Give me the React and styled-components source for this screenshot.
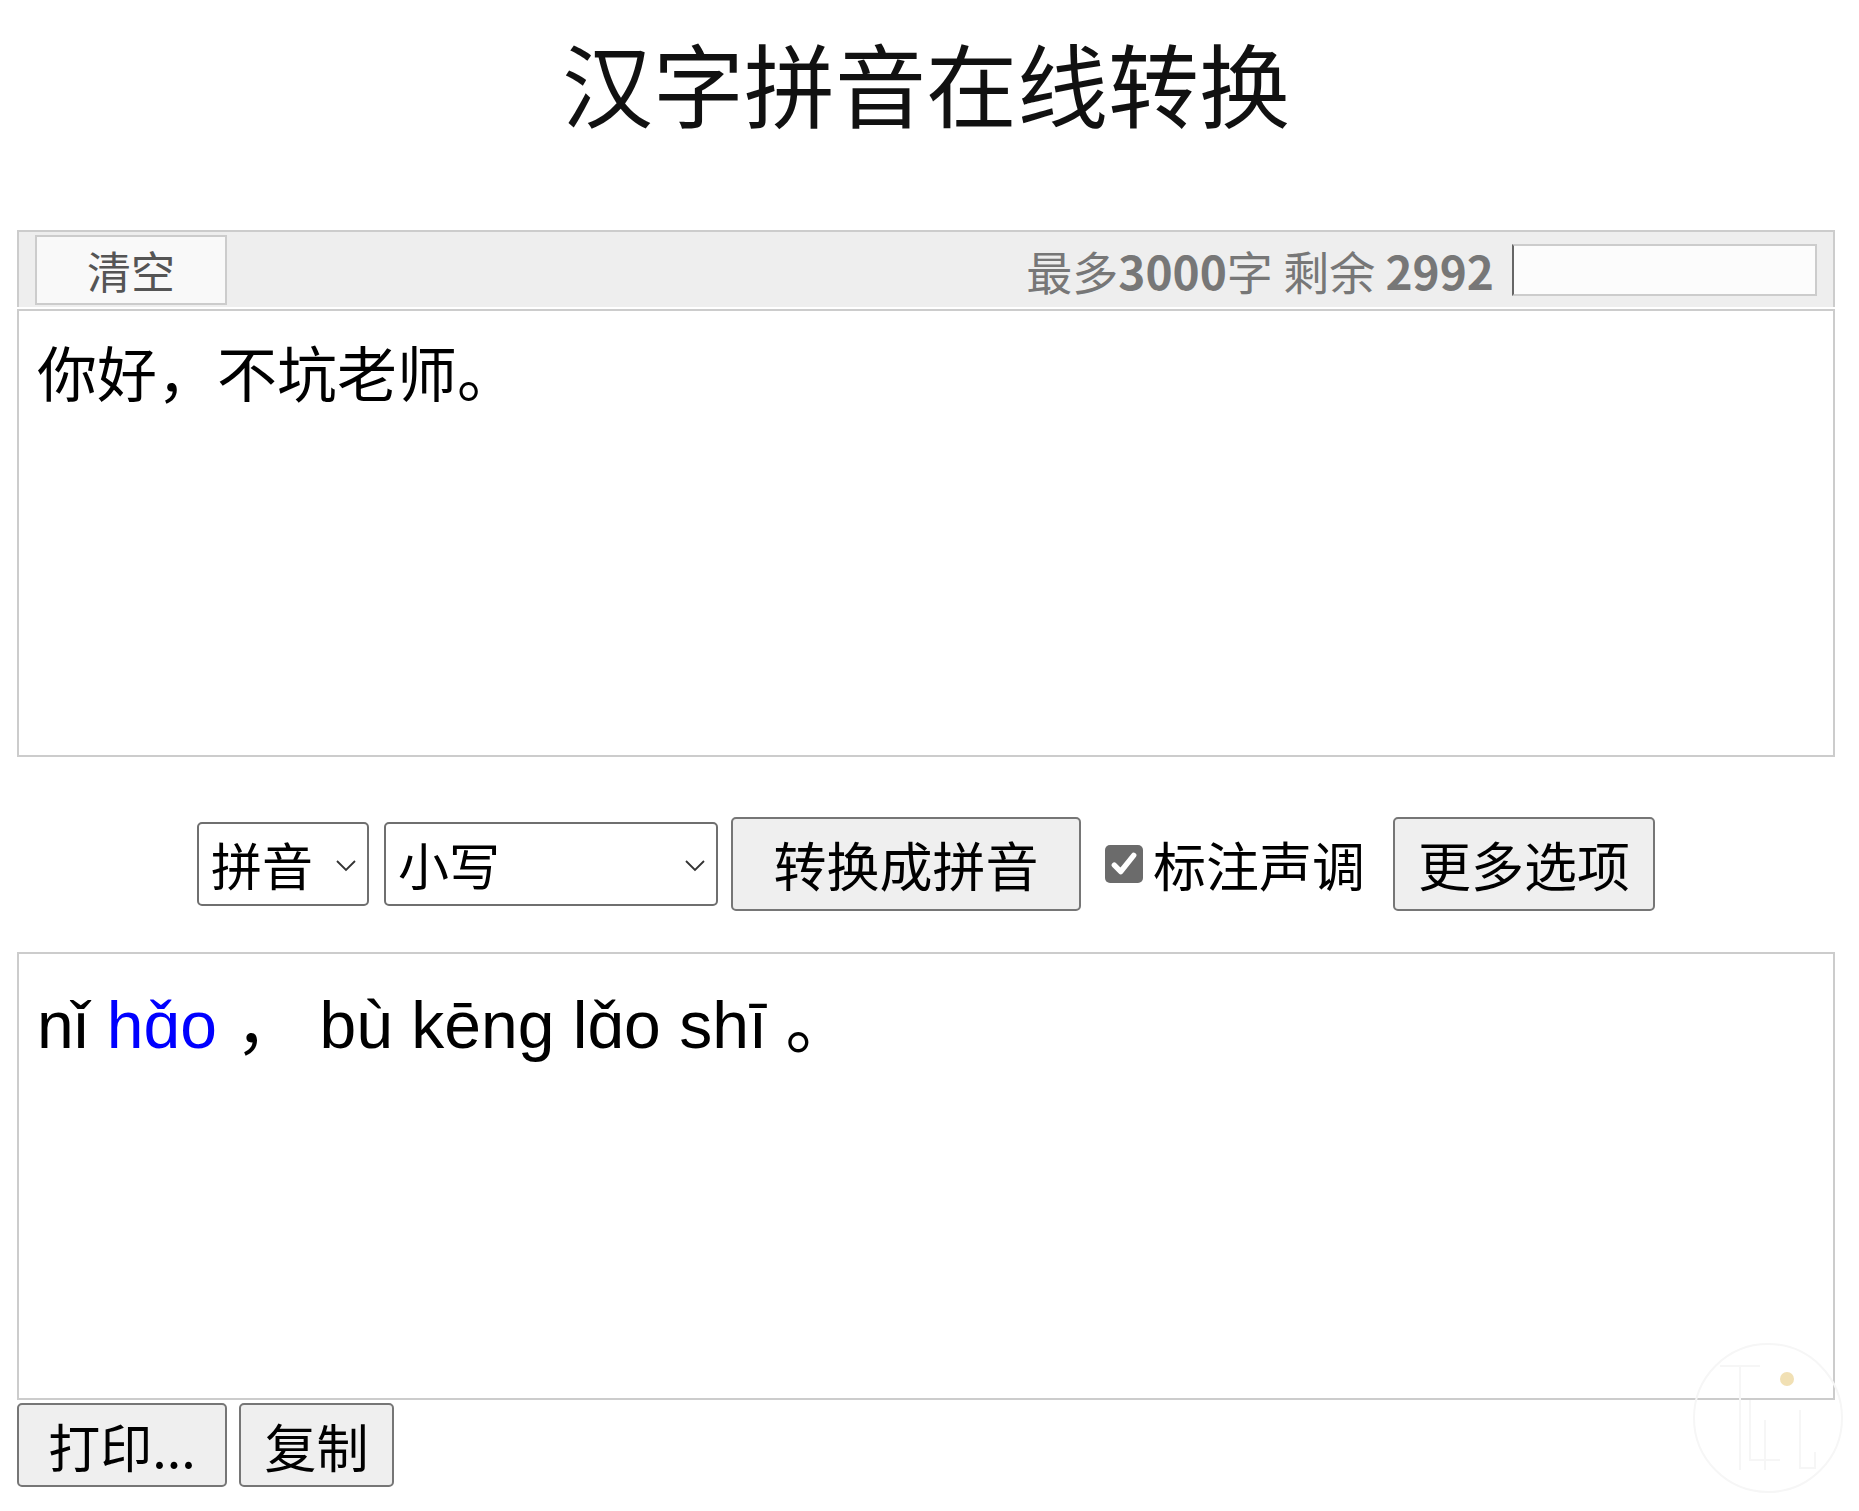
import React from "react";
import styled, { createGlobalStyle } from "styled-components";

const GlobalStyle = createGlobalStyle`
  html, body {
    margin: 0;
    padding: 0;
    background: #fff;
  }
  body {
    font-family: "Noto Sans CJK SC", "Noto Sans", sans-serif;
    color: #000;
  }
`;

const Page = styled.div`
  position: relative;
  min-height: 1511px;
  padding: 16px 24px 0 17px;
  box-sizing: border-box;
`;

const Title = styled.h1`
  margin: 0 0 84px;
  text-align: center;
  font-size: 91px;
  line-height: 130px;
  font-weight: 400;
  color: #111;
`;

const Toolbar = styled.div`
  display: flex;
  align-items: center;
  height: 77px;
  box-sizing: border-box;
  padding: 0 16px;
  background: #eee;
  border: 2px solid #ccc;
  border-bottom: none;
`;

const ClearButton = styled.button`
  width: 192px;
  height: 70px;
  box-sizing: border-box;
  border: 2px solid #ccc;
  background: #f9f9f9;
  color: #555;
  font-family: inherit;
  font-size: 44px;
  line-height: 1;
  padding: 0;
  cursor: pointer;
`;

const Counter = styled.span`
  margin-left: auto;
  font-size: 46px;
  color: #777;
  white-space: pre;

  b {
    font-weight: 700;
  }
`;

const MiniInput = styled.input`
  width: 305px;
  height: 52px;
  box-sizing: border-box;
  margin-left: 18px;
  border: 2px solid #ccc;
  border-left: 2px solid #666;
  background: #fcfcfc;
  outline: none;
`;

const InputArea = styled.textarea`
  display: block;
  width: 100%;
  height: 448px;
  box-sizing: border-box;
  margin: 2px 0 0;
  padding: 16px 18px;
  border: 2px solid #ccc;
  font-family: "Noto Sans CJK SC", sans-serif;
  font-size: 60px;
  line-height: 1.45;
  color: #000;
  resize: none;
  outline: none;
`;

const Controls = styled.div`
  display: flex;
  justify-content: center;
  align-items: center;
  margin: 60px 0 41px;
`;

const SelectWrap = styled.span`
  position: relative;
  display: inline-block;
  width: ${(p) => p.$w}px;
  height: 84px;
  margin-right: ${(p) => p.$gap}px;
`;

const Select = styled.select`
  width: 100%;
  height: 100%;
  box-sizing: border-box;
  appearance: none;
  border: 2px solid #6f6f6f;
  border-radius: 5px;
  background: #fff;
  padding: 0 0 0 12px;
  font-family: "Noto Sans CJK SC", sans-serif;
  font-size: 51px;
  color: #000;
  outline: none;
`;

const Chevron = styled.svg`
  position: absolute;
  right: 13px;
  top: 50%;
  width: 20px;
  height: 12px;
  margin-top: -4px;
  pointer-events: none;
`;

const Button = styled.button`
  width: ${(p) => p.$w}px;
  height: ${(p) => p.$h || 94}px;
  box-sizing: border-box;
  padding: 0;
  border: 2px solid #767676;
  border-radius: 5px;
  background: #efefef;
  font-family: "Noto Sans CJK SC", sans-serif;
  font-size: ${(p) => p.$fs || 53}px;
  color: #000;
  cursor: pointer;
`;

const CheckLabel = styled.label`
  display: flex;
  align-items: center;
  margin: 0 28px 0 24px;
  font-size: 53px;
`;

const CheckBox = styled.span`
  display: inline-flex;
  align-items: center;
  justify-content: center;
  width: 38px;
  height: 38px;
  margin-right: 10px;
  border-radius: 5px;
  background: #6b6b6b;
`;

const Output = styled.div`
  height: 448px;
  box-sizing: border-box;
  padding: 26px 18px 0;
  border: 2px solid #ccc;
  font-family: "Liberation Sans", "Noto Sans CJK SC", sans-serif;
  font-size: 66px;
  line-height: 90px;
  color: #000;
  white-space: pre-wrap;
`;

const Heteronym = styled.span`
  color: #00f;
`;

const Actions = styled.div`
  display: flex;
  gap: 12px;
  margin-top: 3px;
`;

const Watermark = styled.svg`
  position: absolute;
  left: 1690px;
  top: 1340px;
  width: 156px;
  height: 156px;
  pointer-events: none;
`;

export default function App() {
  return (
    <>
      <GlobalStyle />
      <Page>
        <Title>汉字拼音在线转换</Title>
        <Toolbar>
          <ClearButton>清空</ClearButton>
          <Counter>
            最多<b>3000</b>字 剩余 <b>2992</b>
          </Counter>
          <MiniInput type="text" />
        </Toolbar>
        <InputArea defaultValue="你好，不坑老师。" />
        <Controls>
          <SelectWrap $w={172} $gap={15}>
            <Select defaultValue="pinyin">
              <option value="pinyin">拼音</option>
            </Select>
            <Chevron viewBox="0 0 20 12">
              <path d="M1 1 L10 10 L19 1" fill="none" stroke="#333" strokeWidth="1.8" />
            </Chevron>
          </SelectWrap>
          <SelectWrap $w={334} $gap={13}>
            <Select defaultValue="lower">
              <option value="lower">小写</option>
            </Select>
            <Chevron viewBox="0 0 20 12">
              <path d="M1 1 L10 10 L19 1" fill="none" stroke="#333" strokeWidth="1.8" />
            </Chevron>
          </SelectWrap>
          <Button $w={350}>转换成拼音</Button>
          <CheckLabel>
            <CheckBox>
              <svg width="28" height="28" viewBox="0 0 26 26">
                <path d="M4 14 L10 20 L22 5" fill="none" stroke="#fff" strokeWidth="5" strokeLinecap="round" strokeLinejoin="round" />
              </svg>
            </CheckBox>
            标注声调
          </CheckLabel>
          <Button $w={262}>更多选项</Button>
        </Controls>
        <Output>
          nǐ <Heteronym>hɑ̌o</Heteronym> ， bù kēng lɑ̌o shī 。
        </Output>
        <Actions>
          <Button $w={210} $h={84} $fs={52}>打印...</Button>
          <Button $w={155} $h={84} $fs={52}>复制</Button>
        </Actions>
        <Watermark viewBox="0 0 156 156">
          <circle cx="78" cy="78" r="74" fill="none" stroke="#f6f6f6" strokeWidth="2" />
          <path d="M30 26 L70 26 M50 26 L50 130 M60 60 L60 120 L90 120 M75 80 L75 130 M110 70 L110 128 L125 128 L125 112" fill="none" stroke="#f6f6f6" strokeWidth="2" />
          <circle cx="97" cy="39" r="7" fill="#f1e0b4" />
        </Watermark>
      </Page>
    </>
  );
}
